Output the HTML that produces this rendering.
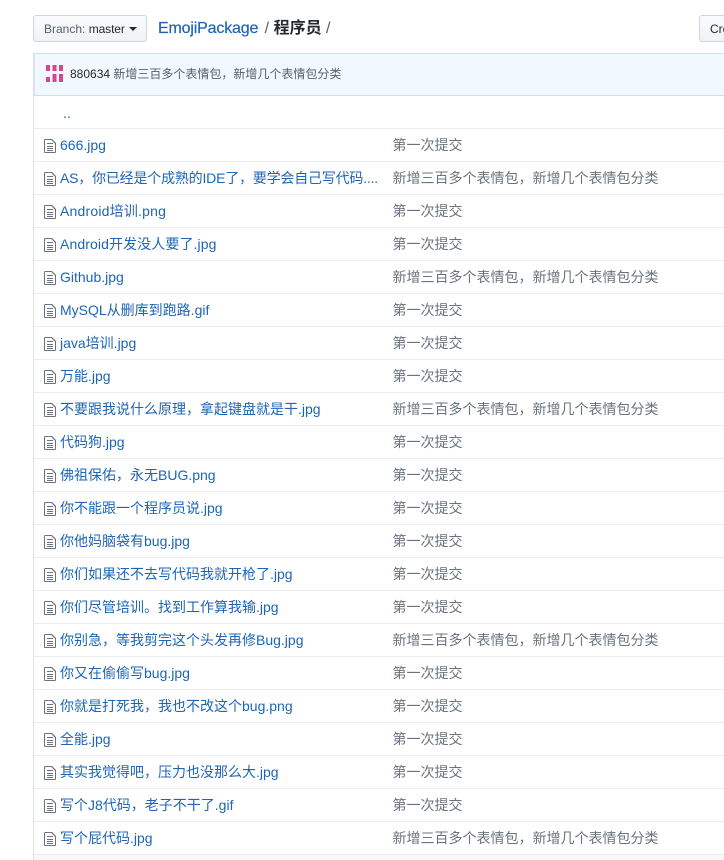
<!DOCTYPE html>
<html lang="zh">
<head>
<meta charset="utf-8">
<title>EmojiPackage / 程序员</title>
<style>
html,body{margin:0;padding:0;background:#fff;width:724px;height:860px;overflow:hidden}
body{position:relative;font-family:"Liberation Sans","Noto Sans CJK SC",sans-serif;font-size:14px;color:#24292e}
.btn{position:absolute;top:15px;height:27px;box-sizing:border-box;border:1px solid #d1d5da;border-radius:3px;background:linear-gradient(#fafbfc,#eff3f6);font-size:12px;line-height:26px;white-space:nowrap}
#branch{left:33px;width:114px;padding-left:10px;color:#586069}
#branch b{font-weight:400;color:#24292e;letter-spacing:-.1px}
#branch i{display:inline-block;width:0;height:0;border:4px solid transparent;border-top-color:#24292e;border-bottom:0;margin-left:4px;vertical-align:2px}
#create{left:699px;width:25px;padding-left:10px;font-size:12px;color:#24292e;overflow:hidden;border-right:0;border-radius:3px 0 0 3px}
#crumb{position:absolute;left:158px;top:17px;font-size:16px;line-height:24px;color:#586069;white-space:nowrap}
#crumb a{color:#1d65b5;letter-spacing:-.17px;-webkit-text-stroke:.2px #1d65b5;margin-right:2px}
#crumb b{color:#24292e;font-weight:700}
#box{position:absolute;left:33px;top:53px;width:691px;height:807px;box-sizing:border-box;border-left:1px solid #dfe2e5;background:#f6f8fa}
#head{position:absolute;left:0;top:0;width:100%;height:43px;box-sizing:border-box;background:#f1f8ff;border:1px solid #c8e1ff;border-left-color:#d5e3f3;border-right:0}
#head svg{position:absolute;left:10px;top:10px}
#head span{position:absolute;left:35px;top:10px;font-size:12px;line-height:20px;color:#586069;white-space:nowrap}
#head b{font-weight:400;color:#24292e}
#up{position:absolute;left:0;top:43px;width:100%;height:33px;box-sizing:border-box;background:#fff;border-bottom:1px solid #eaecef}
#up a{position:absolute;left:29px;top:7px;color:#1d65b5;font-size:14px;line-height:20px}
.r{position:absolute;left:0;width:100%;height:33px;box-sizing:border-box;background:#fff;border-bottom:1px solid #eaecef;white-space:nowrap}
.r svg{position:absolute;left:10px;top:9px}
.r a{position:absolute;left:26px;top:6px;color:#1d65b5;line-height:20px;letter-spacing:0}
.r span{position:absolute;left:358.5px;top:6px;color:#6a737d;line-height:20px}
</style>
</head>
<body>
<svg width="0" height="0" style="position:absolute"><defs><symbol id="f" viewBox="0 0 12 16"><path d="M3 5h6v1H3zM3 8h6v1H3zM3 10h6v1H3zM3 12h6v1H3zM8 1H1C.5 1 0 1.5 0 2v12c0 .5.5 1 1 1h10c.5 0 1-.5 1-1V5zM11 14H1V2h6.3L11 5.7z" fill="#6a737d"/></symbol></defs></svg>
<div class="btn" id="branch">Branch: <b>master</b><i></i></div>
<div id="crumb"><a>EmojiPackage</a> / <b>程序员</b> /</div>
<div class="btn" id="create">Create new file</div>
<div id="box">
<div id="head"><svg width="20" height="20" viewBox="0 0 20 20"><g fill="#d6458f"><rect x="1" y="1" width="4" height="6"/><rect x="7.5" y="1" width="4" height="6"/><rect x="14" y="1" width="4" height="6"/><rect x="1" y="13" width="4" height="5"/><rect x="7.5" y="10" width="4" height="8"/><rect x="14" y="10" width="4" height="8"/></g></svg><span><b>880634</b> 新增三百多个表情包，新增几个表情包分类</span></div>
<div id="up"><a>..</a></div>
<div class="r" style="top:76px"><svg width="12" height="16"><use href="#f"/></svg><a>666.jpg</a><span>第一次提交</span></div>
<div class="r" style="top:109px"><svg width="12" height="16"><use href="#f"/></svg><a style="letter-spacing:-.2px">AS，你已经是个成熟的IDE了，要学会自己写代码....</a><span>新增三百多个表情包，新增几个表情包分类</span></div>
<div class="r" style="top:142px"><svg width="12" height="16"><use href="#f"/></svg><a style="letter-spacing:.2px">Android培训.png</a><span>第一次提交</span></div>
<div class="r" style="top:175px"><svg width="12" height="16"><use href="#f"/></svg><a style="letter-spacing:.1px">Android开发没人要了.jpg</a><span>第一次提交</span></div>
<div class="r" style="top:208px"><svg width="12" height="16"><use href="#f"/></svg><a>Github.jpg</a><span>新增三百多个表情包，新增几个表情包分类</span></div>
<div class="r" style="top:241px"><svg width="12" height="16"><use href="#f"/></svg><a>MySQL从删库到跑路.gif</a><span>第一次提交</span></div>
<div class="r" style="top:274px"><svg width="12" height="16"><use href="#f"/></svg><a>java培训.jpg</a><span>第一次提交</span></div>
<div class="r" style="top:307px"><svg width="12" height="16"><use href="#f"/></svg><a>万能.jpg</a><span>第一次提交</span></div>
<div class="r" style="top:340px"><svg width="12" height="16"><use href="#f"/></svg><a>不要跟我说什么原理，拿起键盘就是干.jpg</a><span>新增三百多个表情包，新增几个表情包分类</span></div>
<div class="r" style="top:373px"><svg width="12" height="16"><use href="#f"/></svg><a>代码狗.jpg</a><span>第一次提交</span></div>
<div class="r" style="top:406px"><svg width="12" height="16"><use href="#f"/></svg><a>佛祖保佑，永无BUG.png</a><span>第一次提交</span></div>
<div class="r" style="top:439px"><svg width="12" height="16"><use href="#f"/></svg><a>你不能跟一个程序员说.jpg</a><span>第一次提交</span></div>
<div class="r" style="top:472px"><svg width="12" height="16"><use href="#f"/></svg><a>你他妈脑袋有bug.jpg</a><span>第一次提交</span></div>
<div class="r" style="top:505px"><svg width="12" height="16"><use href="#f"/></svg><a>你们如果还不去写代码我就开枪了.jpg</a><span>第一次提交</span></div>
<div class="r" style="top:538px"><svg width="12" height="16"><use href="#f"/></svg><a>你们尽管培训。找到工作算我输.jpg</a><span>第一次提交</span></div>
<div class="r" style="top:571px"><svg width="12" height="16"><use href="#f"/></svg><a>你别急，等我剪完这个头发再修Bug.jpg</a><span>新增三百多个表情包，新增几个表情包分类</span></div>
<div class="r" style="top:604px"><svg width="12" height="16"><use href="#f"/></svg><a>你又在偷偷写bug.jpg</a><span>第一次提交</span></div>
<div class="r" style="top:637px"><svg width="12" height="16"><use href="#f"/></svg><a>你就是打死我，我也不改这个bug.png</a><span>第一次提交</span></div>
<div class="r" style="top:670px"><svg width="12" height="16"><use href="#f"/></svg><a>全能.jpg</a><span>第一次提交</span></div>
<div class="r" style="top:703px"><svg width="12" height="16"><use href="#f"/></svg><a>其实我觉得吧，压力也没那么大.jpg</a><span>第一次提交</span></div>
<div class="r" style="top:736px"><svg width="12" height="16"><use href="#f"/></svg><a>写个J8代码，老子不干了.gif</a><span>第一次提交</span></div>
<div class="r" style="top:769px"><svg width="12" height="16"><use href="#f"/></svg><a>写个屁代码.jpg</a><span>新增三百多个表情包，新增几个表情包分类</span></div>
</div>
</body>
</html>
